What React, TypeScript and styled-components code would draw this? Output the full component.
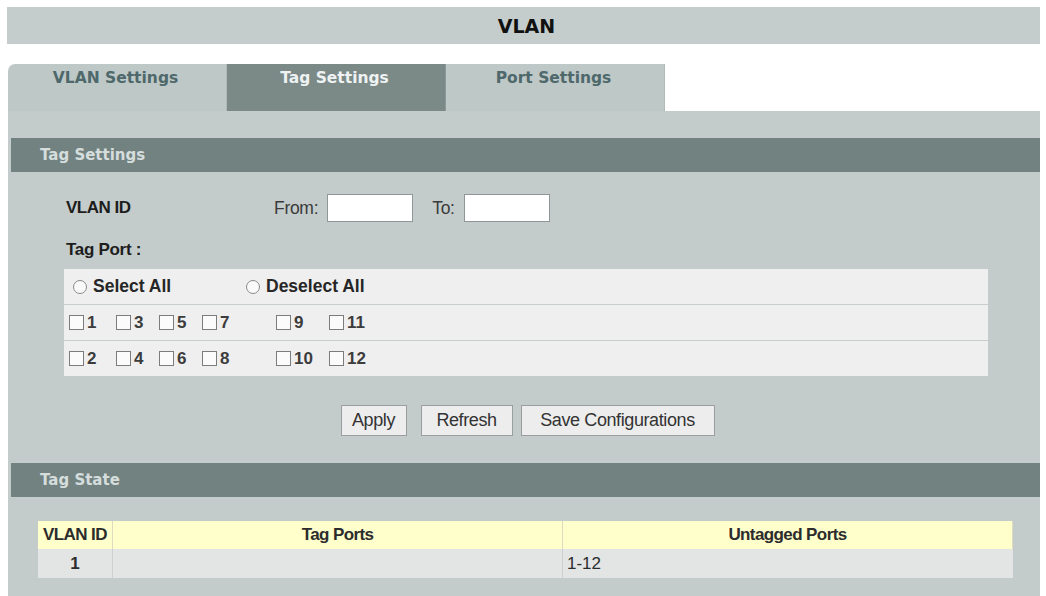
import React from 'react';
import styled, { createGlobalStyle } from 'styled-components';

const GlobalStyle = createGlobalStyle`
  html, body {
    margin: 0;
    padding: 0;
    background: #ffffff;
  }
  body {
    font-family: "Liberation Sans", Arial, sans-serif;
  }
`;

const Page = styled.div`
  width: 1046px;
  height: 596px;
  box-sizing: border-box;
  padding: 7px 6px 0 7px;
  overflow: hidden;
  display: flex;
  flex-direction: column;
`;

const TitleBar = styled.div`
  height: 37px;
  background: #c5cdcc;
  display: flex;
  align-items: center;
  justify-content: center;
  font-family: "DejaVu Sans", Verdana, sans-serif;
  font-weight: bold;
  font-size: 19px;
  color: #111;
  padding-left: 6px;
`;

const TabRow = styled.div`
  display: flex;
  margin-top: 20px;
  padding-left: 1px;
  height: 47px;
`;

const Tab = styled.div<{ $active?: boolean; $first?: boolean }>`
  width: 219px;
  box-sizing: border-box;
  background: ${(p) => (p.$active ? '#7b8987' : '#bec8c7')};
  color: ${(p) => (p.$active ? '#eef2f2' : '#4e686b')};
  border-top-left-radius: ${(p) => (p.$first ? '7px' : '0')};
  border-right: 1px solid ${(p) => (p.$active ? '#8d9998' : '#b0bab9')};
  font-family: "DejaVu Sans", Verdana, sans-serif;
  font-weight: bold;
  font-size: 15.5px;
  text-align: center;
  padding: 5px 3px 0 0;
`;

const Panel = styled.div`
  flex: 1;
  background: #c3cccb;
  padding: 27px 0 0 3px;
  margin-left: 1px;
  display: flex;
  flex-direction: column;
`;

const SectionHeader = styled.div`
  height: 34px;
  background: #718280;
  color: #d6dddd;
  font-family: "DejaVu Sans", Verdana, sans-serif;
  font-weight: bold;
  font-size: 15px;
  display: flex;
  align-items: center;
  padding-left: 29px;
`;

const Form = styled.div`
  padding: 22px 52px 0 53px;
  display: flex;
  flex-direction: column;
`;

const Label = styled.span`
  font-weight: bold;
  font-size: 17px;
  color: #1d1d1d;
  letter-spacing: -0.3px;
`;

const IdRow = styled.div`
  display: flex;
  align-items: center;
  height: 28px;
  padding-left: 2px;
`;

const IdLabel = styled(Label)`
  width: 208px;
  letter-spacing: -0.5px;
`;

const FieldLabel = styled.span`
  font-size: 17.5px;
  color: #3a3a3a;
  margin-right: 9px;
  letter-spacing: -0.3px;
`;

const TextInput = styled.input`
  width: 86px;
  height: 28px;
  box-sizing: border-box;
  border: 1px solid #8f9696;
  background: #fff;
  margin-right: 19px;
`;

const PortLabelRow = styled.div`
  height: 20px;
  margin-top: 18px;
  padding-left: 2px;
  display: flex;
  align-items: center;
`;

const PortTable = styled.div`
  margin-top: 9px;
  background: #efefef;
  display: flex;
  flex-direction: column;
`;

const PortRow = styled.div<{ $last?: boolean }>`
  height: 35px;
  display: flex;
  align-items: center;
  padding-left: 5px;
  border-bottom: ${(p) => (p.$last ? 'none' : '1px solid #c8cecd')};
`;

const RadioItem = styled.label<{ $w: number }>`
  width: ${(p) => p.$w}px;
  display: flex;
  align-items: center;
  font-weight: bold;
  font-size: 17.5px;
  color: #262626;
`;

const Radio = styled.span`
  width: 14px;
  height: 14px;
  border-radius: 50%;
  border: 1px solid #8a8a8a;
  background: #fafafa;
  box-sizing: border-box;
  margin: 0 6px 0 4px;
`;

const CheckItem = styled.label<{ $w: number }>`
  width: ${(p) => p.$w}px;
  display: flex;
  align-items: center;
  font-weight: bold;
  font-size: 17px;
  color: #3c3c3c;
`;

const Box = styled.span`
  width: 15px;
  height: 15px;
  border: 1px solid #7c7c7c;
  background: #fbfbfb;
  box-sizing: border-box;
  margin-right: 3px;
`;

const ButtonRow = styled.div`
  display: flex;
  justify-content: center;
  gap: 8px;
  margin-top: 29px;
  padding-left: 3px;
`;

const Button = styled.button<{ $w: number }>`
  width: ${(p) => p.$w}px;
  height: 31px;
  background: #ededed;
  border: 1px solid #9a9e9e;
  font-family: "Liberation Sans", Arial, sans-serif;
  font-size: 18px;
  color: #333;
  padding: 0;
  letter-spacing: -0.4px;
`;

const StateHeader = styled(SectionHeader)`
  margin-top: 27px;
`;

const StateTable = styled.div`
  margin: 24px 27px 0 27px;
  display: grid;
  grid-template-columns: 75px 450px 1fr;
`;

const HeadCell = styled.div`
  height: 28px;
  background: #ffffcc;
  border-right: 1px solid #dedcc0;
  display: flex;
  align-items: center;
  justify-content: center;
  font-weight: bold;
  font-size: 17px;
  color: #2c2c2c;
  letter-spacing: -0.6px;
  &:last-child {
    border-right: none;
  }
`;

const DataCell = styled.div<{ $align?: string }>`
  height: 29px;
  background: #e3e4e4;
  border-right: 1px solid #cdd0d0;
  display: flex;
  align-items: center;
  justify-content: ${(p) => p.$align || 'flex-start'};
  padding-left: ${(p) => (p.$align === 'center' ? '0' : '4px')};
  font-size: 17px;
  color: #2c2c2c;
  &:last-child {
    border-right: none;
  }
`;

const BoldData = styled(DataCell)`
  font-weight: bold;
`;

const widthsRow = [47, 43, 43, 74, 53, 60];
const oddPorts = ['1', '3', '5', '7', '9', '11'];
const evenPorts = ['2', '4', '6', '8', '10', '12'];

export default function App() {
  return (
    <>
      <GlobalStyle />
      <Page>
        <TitleBar>VLAN</TitleBar>
        <TabRow>
          <Tab $first>VLAN Settings</Tab>
          <Tab $active>Tag Settings</Tab>
          <Tab>Port Settings</Tab>
        </TabRow>
        <Panel>
          <SectionHeader>Tag Settings</SectionHeader>
          <Form>
            <IdRow>
              <IdLabel>VLAN ID</IdLabel>
              <FieldLabel>From:</FieldLabel>
              <TextInput />
              <FieldLabel>To:</FieldLabel>
              <TextInput />
            </IdRow>
            <PortLabelRow>
              <Label>Tag Port :</Label>
            </PortLabelRow>
            <PortTable>
              <PortRow>
                <RadioItem $w={173}>
                  <Radio />
                  Select All
                </RadioItem>
                <RadioItem $w={200}>
                  <Radio />
                  Deselect All
                </RadioItem>
              </PortRow>
              <PortRow>
                {oddPorts.map((n, i) => (
                  <CheckItem key={n} $w={widthsRow[i]}>
                    <Box />
                    {n}
                  </CheckItem>
                ))}
              </PortRow>
              <PortRow $last>
                {evenPorts.map((n, i) => (
                  <CheckItem key={n} $w={widthsRow[i]}>
                    <Box />
                    {n}
                  </CheckItem>
                ))}
              </PortRow>
            </PortTable>
            <ButtonRow>
              <Button $w={66} style={{ marginRight: 6 }}>Apply</Button>
              <Button $w={92}>Refresh</Button>
              <Button $w={194}>Save Configurations</Button>
            </ButtonRow>
          </Form>
          <StateHeader>Tag State</StateHeader>
          <StateTable>
            <HeadCell>VLAN ID</HeadCell>
            <HeadCell>Tag Ports</HeadCell>
            <HeadCell>Untagged Ports</HeadCell>
            <BoldData $align="center">1</BoldData>
            <DataCell />
            <DataCell>1-12</DataCell>
          </StateTable>
        </Panel>
      </Page>
    </>
  );
}
